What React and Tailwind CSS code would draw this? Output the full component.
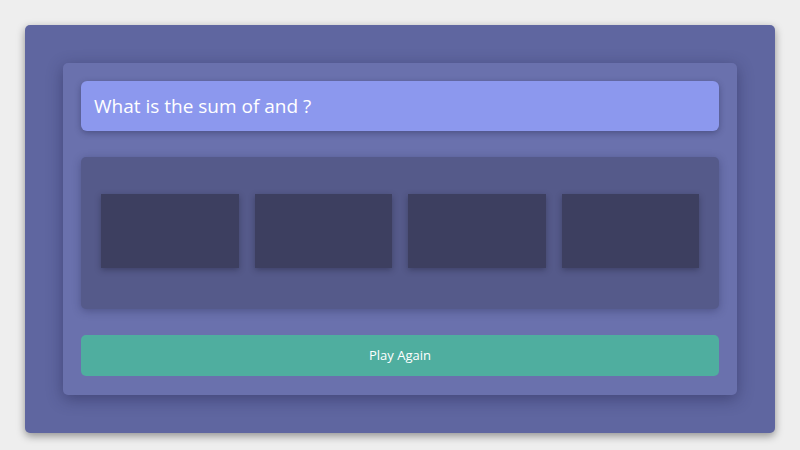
export default function App() {
  const options = [0, 1, 2, 3];

  return (
    <div className="min-h-screen bg-[#eeeeee] p-[25px]" style={{ fontFamily: '"Open Sans", sans-serif' }}>
      <div className="rounded-[5px] bg-[#5f66a0] p-[38px] shadow-[0_3px_8px_rgba(0,0,0,0.4)]">
        <div className="flex flex-col gap-[26px] rounded-[5px] bg-[#6a71ad] px-[18px] pb-[19px] pt-[18px] shadow-[0_4px_16px_rgba(30,32,70,0.45)]">
          <div className="flex h-[50px] items-center rounded-[6px] bg-[#8c98ee] px-[13px] text-[19px] text-white shadow-[0_2px_6px_rgba(30,32,70,0.4)]">
            What is the sum of and ?
          </div>
          <div className="flex h-[152px] items-start gap-[16px] rounded-[5px] bg-[#555a8a] px-[20px] pt-[37px] shadow-[0_2px_8px_rgba(30,32,70,0.35)]">
            {options.map((i) => (
              <div key={i} className="h-[74px] flex-1 bg-[#3d3f60] shadow-[0_2px_6px_rgba(20,20,40,0.35)]" />
            ))}
          </div>
          <button className="h-[41px] rounded-[5px] bg-[#4fae9f] text-[13px] text-white">
            Play Again
          </button>
        </div>
      </div>
    </div>
  );
}
